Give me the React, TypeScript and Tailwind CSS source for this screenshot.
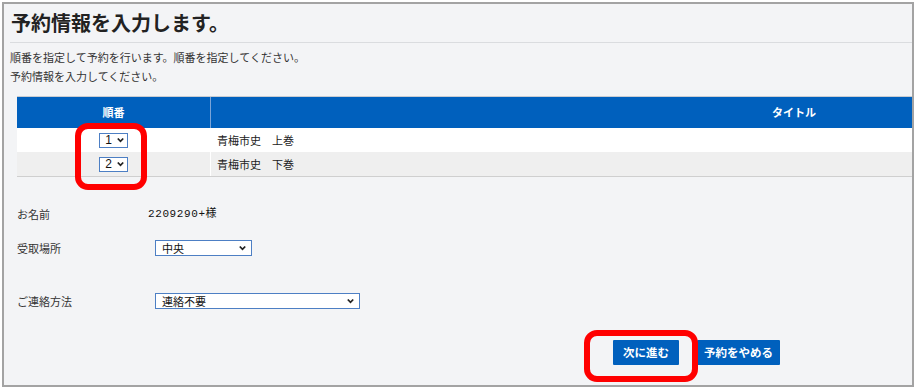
import React from "react";

const jp = { fontFamily: '"Noto Sans CJK JP", "Noto Sans", sans-serif' };

const Chevron = () => (
  <svg width="7" height="6" viewBox="0 0 7 6" className="shrink-0">
    <path d="M0.8 1.5 L3.5 4.3 L6.2 1.5" fill="none" stroke="#222" strokeWidth="1.8" />
  </svg>
);

const FakeSelect = ({ value, className }: { value: string; className: string }) => (
  <div
    className={`flex items-center justify-between bg-white border border-[#4d7fc4] text-[11px] text-[#111] ${className}`}
  >
    <span className="leading-none">{value}</span>
    <Chevron />
  </div>
);

const rows = [
  { order: "1", title: "青梅市史　上巻", bg: "bg-white" },
  { order: "2", title: "青梅市史　下巻", bg: "bg-[#efefef]" },
];

export default function App() {
  return (
    <div className="relative w-[916px] h-[391px] bg-white text-[#333]" style={jp}>
      <div className="ml-[2px] mt-[2px] w-[912px] h-[385px] border-2 border-[#a3a3a3] bg-[#f3f4f6] overflow-hidden">
        {/* heading */}
        <div className="h-[38px] flex items-center pl-[7px] text-[20px] font-bold text-[#222]">
          予約情報を入力します。
        </div>
        <div className="ml-[6px] h-px bg-[#dadcdf]" />

        <div className="pl-[6px] pt-[5px] text-[11px] leading-[19px]">
          <p>順番を指定して予約を行います。順番を指定してください。</p>
          <p>予約情報を入力してください。</p>
        </div>

        {/* table */}
        <div className="ml-[13px] mt-[10px] w-[1360px] border-t border-[#c8ccd2] border-b border-b-[#cfcfcf] text-[11px]">
          <div className="flex h-[31px] bg-[#0060bd] text-white font-bold">
            <div className="w-[194px] flex items-center justify-center border-r border-[#7aa4d8]">順番</div>
            <div className="w-[1166px] flex items-center justify-center">タイトル</div>
          </div>
          {rows.map((r) => (
            <div key={r.order} className={`flex h-[24px] ${r.bg}`}>
              <div className="w-[194px] flex items-center justify-center border-r border-white">
                <div className="w-[29px] h-[15px] flex items-center justify-end gap-[5px] pr-[3px] bg-white border border-[#4d7fc4] text-[12px] text-[#111]">
                  <span className="leading-none" style={{ fontFamily: '"Liberation Sans", Arial, sans-serif' }}>
                    {r.order}
                  </span>
                  <Chevron />
                </div>
              </div>
              <div className="w-[1166px] flex items-center pl-[6px] text-[#222]">{r.title}</div>
            </div>
          ))}
        </div>

        {/* form */}
        <div className="pl-[13px] text-[11px]">
          <div className="mt-[27px] h-[20px] flex items-center">
            <div className="w-[131px]">お名前</div>
            <div
              className="text-[11px] text-[#111] tracking-[0.6px]"
              style={{ fontFamily: '"Liberation Mono", "Noto Sans CJK JP", monospace' }}
            >
              2209290+様
            </div>
          </div>
          <div className="mt-[14px] h-[20px] flex items-center">
            <div className="w-[138px]">受取場所</div>
            <FakeSelect value="中央" className="w-[97px] h-[16px] pl-[6px] pr-[5px]" />
          </div>
          <div className="mt-[33px] h-[20px] flex items-center">
            <div className="w-[138px]">ご連絡方法</div>
            <FakeSelect value="連絡不要" className="w-[205px] h-[16px] pl-[6px] pr-[5px]" />
          </div>
          <div className="mt-[29px] flex pl-[596px] gap-[18px]">
            <button className="w-[66px] h-[25px] bg-[#0060bd] text-white text-[11.5px] font-bold rounded-[1px]">
              次に進む
            </button>
            <button className="w-[83px] h-[25px] bg-[#0060bd] text-white text-[11.5px] font-bold rounded-[1px]">
              予約をやめる
            </button>
          </div>
        </div>
      </div>

      {/* red annotation frames */}
      <div className="absolute left-[75px] top-[121px] w-[72px] h-[67px] border-[6px] border-[#ff0000] rounded-[13px]" />
      <div className="absolute left-[584px] top-[328px] w-[114px] h-[52px] border-[6px] border-[#ff0000] rounded-[13px]" />
    </div>
  );
}
